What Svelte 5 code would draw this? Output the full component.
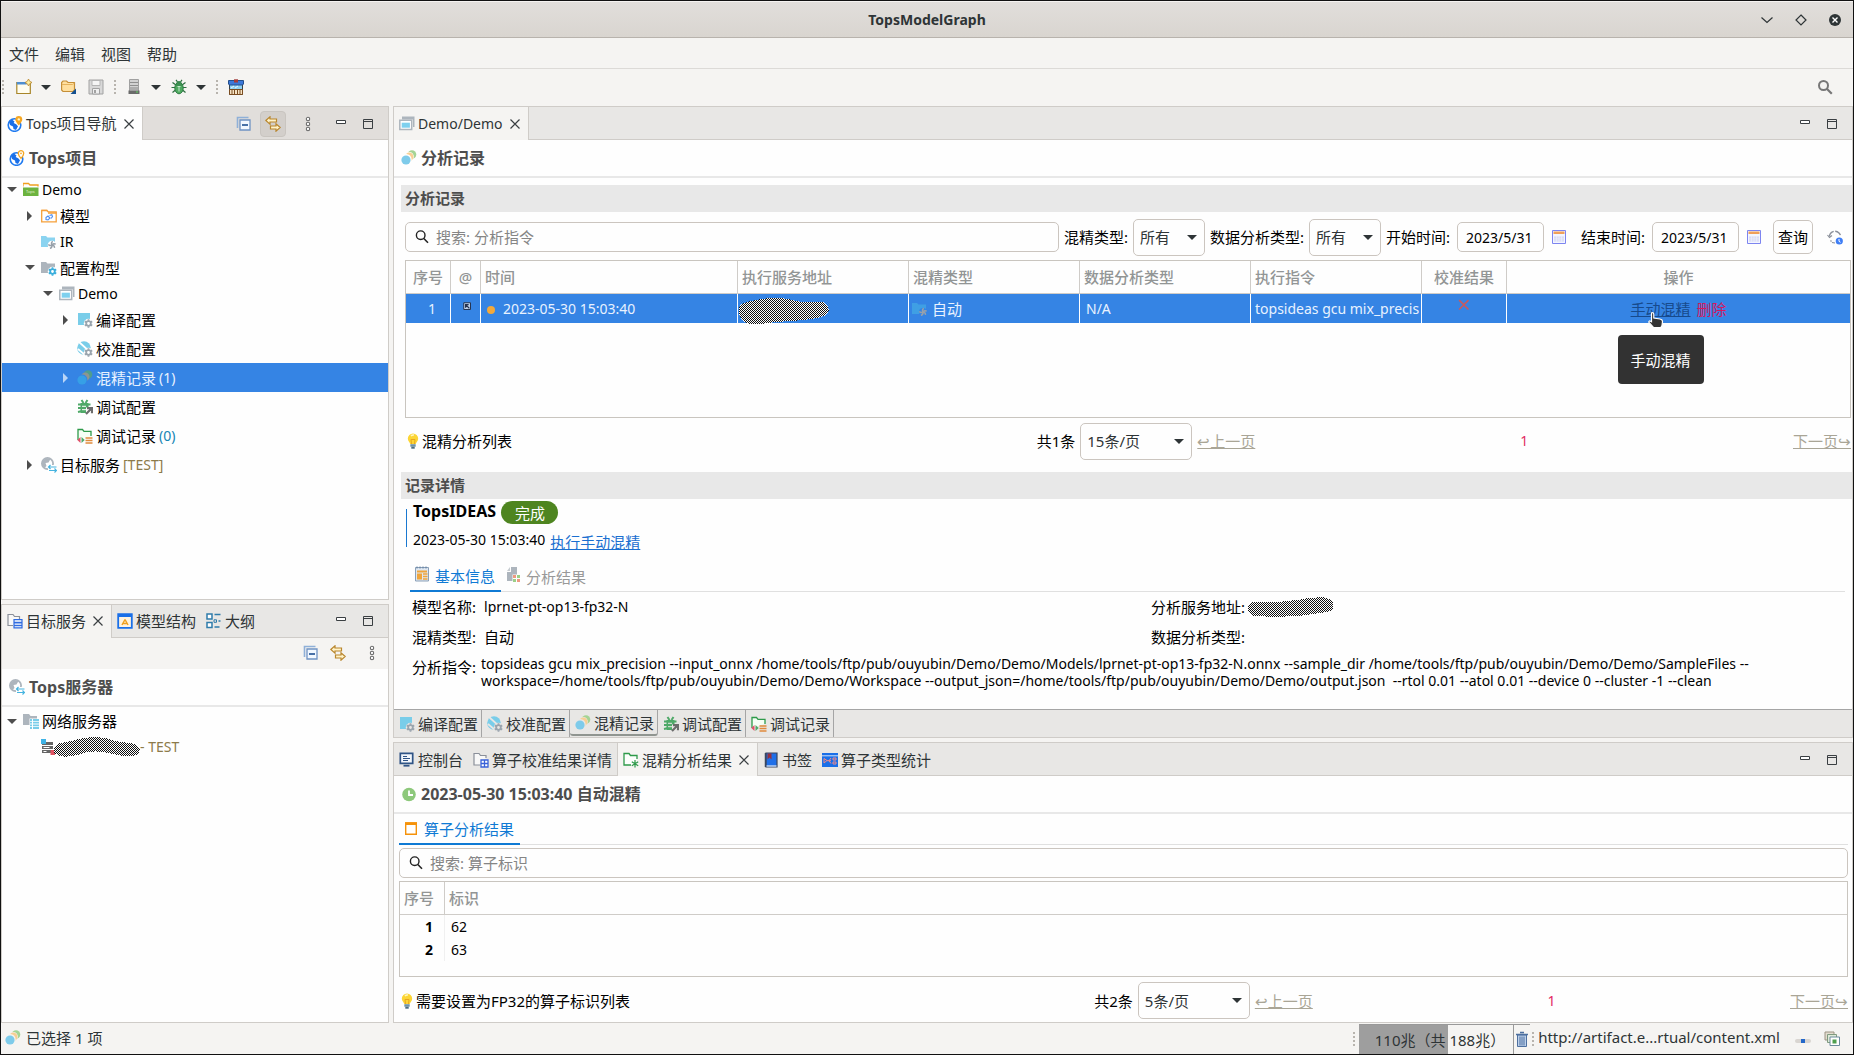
<script>
  const gear = (c) =>
    `<g fill="none" stroke="${c}"><circle cx="11.5" cy="11.5" r="2.3" stroke-width="1.8"/><path d="M11.5 7.2v1.6M11.5 14.2v1.6M7.8 9.4l1.4.8M13.8 12.8l1.4.8M7.8 13.6l1.4-.8M13.8 10.2l1.4-.8" stroke-width="1.8"/></g>`;
  const pinwheel =
    '<g fill="none" stroke="#98a1aa" stroke-width="1.5"><path d="M11 11c-1-1.5-.5-3 .8-3.6M11 11c1-1.5 2.6-1.6 3.6-.6M11 11c1.8.1 2.7 1.4 2.4 2.8M11 11c.3 1.8-.7 3-2.1 3.2M11 11c-1.4 1-2.9.6-3.6-.6"/></g>';

  const icons = {
    globe:
      '<circle cx="7.5" cy="9" r="6.300" fill="#fff" stroke="#1f7af0" stroke-width="1.600"/><path d="M2 6l3-2.500 2.500 2-.8 1.500 2.500 1.200 1.800 2-2 3.800-2.500-1-.5-2.600-3-1.400z" fill="#1a6fe8"/><path d="M11.800 0a3.500 3.500 0 0 1 3.500 3.400c0 2.200-3.500 6-3.500 6S8.300 5.600 8.300 3.400A3.500 3.500 0 0 1 11.800 0z" fill="#f5a623"/><circle cx="11.800" cy="3.400" r="1.200" fill="#fff6c8"/>',
    globeLine:
      '<circle cx="7.500" cy="9" r="6.300" fill="#fff" stroke="#1f7af0" stroke-width="1.600"/><path d="M2 6l3-2.500 2.500 2-.8 1.500 2.500 1.200 1.800 2-2 3.800-2.500-1-.5-2.600-3-1.400z" fill="#1a6fe8"/><path d="M12 .7a2.700 2.700 0 0 1 2.700 2.700c0 1.800-2.700 5-2.700 5S9.300 5.200 9.300 3.400A2.700 2.700 0 0 1 12 .7z" fill="#fff" stroke="#f5a623" stroke-width="1.300"/><circle cx="12" cy="3.300" r=".9" fill="#f5a623"/>',
    project:
      '<path d="M0 4.500V1.500h5.500L7 3h8v1.500" fill="#fff" stroke="#f0a020" stroke-width="1.300"/><path d="M0 5.500h15.500V14H0z" fill="#6cb33f"/><text x="3" y="11" font-size="4" font-family="Noto Sans" fill="#e8f5dd">Tops</text>',
    model:
      '<path d="M.700 13.800V2.300h5l1.500 1.500h8v10z" fill="#fff" stroke="#f5a03a" stroke-width="1.300"/><path d="M.5 2.500h6M7 5h8.500" stroke="#f5a03a" stroke-width="1.600"/><path d="M5 9.500l2-1.500 2 2-2 1.800-2-.300zM8.500 7.500l2.300-.8.7 2-1.500 1.800" fill="none" stroke="#4d8df0" stroke-width="1.100"/>',
    ir: `<path d="M0 2h5l1.500 1.500H14V13H0z" fill="#8ad3f0"/><circle cx="11" cy="11" r="4.300" fill="#fff"/>${pinwheel}`,
    irSel: `<path d="M0 2h5l1.500 1.500H14V13H0z" fill="#3f9fe4"/><circle cx="11" cy="11" r="4" fill="#3584e4"/>${pinwheel}`,
    config: `<path d="M0 2h5l1.500 1.500H14V13H0z" fill="#adb5bd"/><circle cx="11.500" cy="11.500" r="4.700" fill="#fff"/>${gear('#3aaedc')}`,
    windows:
      '<path d="M3 .5h12.500V11H14V3.500H3z" fill="#adb5bd"/><path d="M.8 4.300h11.900v9.200H.8z" fill="#fff" stroke="#adb5bd" stroke-width="1.500"/><path d="M2.700 6.700h8.200v5H2.700z" fill="#7ed0ee"/>',
    compile: `<path d="M1 1h12v12H1z" fill="#79cde9"/><circle cx="11.500" cy="11.500" r="4.700" fill="var(--under, #fff)"/>${gear('#9aa5ae')}`,
    calib: `<circle cx="7" cy="7" r="6.800" fill="#79cde9"/><path d="M2 1l11 10M1 8l7 6" stroke="var(--under, #fff)" stroke-width="1.700"/><circle cx="11.500" cy="11.500" r="4.700" fill="var(--under, #fff)"/>${gear('#9aa5ae')}`,
    mix: '<circle cx="11" cy="4.500" r="4.300" fill="#a5d494"/><circle cx="8.500" cy="6.500" r="4.400" fill="var(--under, #fff)"/><circle cx="8.300" cy="6.700" r="4.200" fill="#f8cf94"/><circle cx="5.400" cy="9.300" r="5.200" fill="var(--under, #fff)"/><circle cx="5" cy="10" r="4.600" fill="#7ecbea"/>',
    mixSel:
      '<circle cx="11" cy="4.500" r="4.300" fill="#4f9d8f"/><circle cx="8.300" cy="6.700" r="4.200" fill="#8d9690"/><circle cx="5.300" cy="9.600" r="5.100" fill="#3584e4"/><circle cx="5" cy="10" r="4.600" fill="#36a0e6"/>',
    debug:
      '<path d="M3.500 4h8v10h-8z" fill="#4fa968"/><path d="M4.500 1l2 3M10.500 1l-2 3M1 5.500h12.500M1 9h6M1 13l4-1" stroke="#4fa968" stroke-width="2"/><path d="M5 7.300h4M5 10.700h4" stroke="var(--under, #fff)"/><path d="M9 8.500h7v7.500H9z" fill="var(--under, #fff)"/><path d="M9 15l5-5M10 9.200h5v5" stroke="#6c6c6c" stroke-width="2.200" fill="none"/>',
    debugRec:
      '<path d="M1 12V1.500h4.500L7 3.300h7V8" fill="#f5fff5" stroke="#2e9a4a" stroke-width="1.300"/><path d="M.3 12l3.200-3v6z" fill="#e0526a"/><path d="M4.500 9l3.200 3-3.200 3z" fill="#4fa968"/><path d="M8.500 10h7M8.500 12.500h7M8.500 15h7" stroke="#e08a3c" stroke-width="1.300"/>',
    target:
      '<circle cx="6.500" cy="6.500" r="5.600" fill="#fff" stroke="#adb5bd" stroke-width="1.800"/><path d="M1.500 4l4-3 4 1-2 3.500-3 .5 1 3-2 2L1 8z" fill="#adb5bd"/><path d="M7 8h9v8H7z" fill="#fff"/><path d="M7.500 10h8M9.500 8l-2 2 2 2M8 13.500h8M13.500 11.500l2 2-2 2" stroke="#46b4e0" stroke-width="1.200" fill="none"/>',
    folderServer:
      '<path d="M6 12.500H1V1.500h5l1.500 2h5V6" fill="#f8f8f8" stroke="#8a8f99" stroke-width="1.200"/><path d="M7 6.700h8v2.600H7zM7 9.800h8v2.600H7zM7 12.600h8v2.300H7z" fill="#fff" stroke="#2f6be0" stroke-width="1.200"/>',
    structure:
      '<path d="M1.200 1.200h13.600v13.600H1.200z" fill="#fff3df" stroke="#1a6fe8" stroke-width="1.800"/><path d="M1 1h14v3H1z" fill="#1a6fe8"/><path d="M8 6.500l-3 5.500M8 6.500l3 5.500M6 10.500h4" stroke="#f0a020" stroke-width="1.500"/>',
    outline:
      '<path d="M1 1h5v5H1zM1 9.500h5v5H1z" fill="#fff" stroke="#2f7cab" stroke-width="1.500"/><path d="M8.500 1.500h6M12.500 8h2M8.500 14h5" stroke="#2f7cab" stroke-width="1.500"/><path d="M8 6.800h2.500v2.500H8z" fill="none" stroke="#2f7cab"/>',
    network:
      '<path d="M0 1h6l1.500 2H14v9H0z" fill="#adb5bd"/><path d="M6.500 5.500H16V16H6.500z" fill="#fff"/><path d="M7 7h2M10 7h6M7 9.700h2M10 9.700h6M7 12.400h2M10 12.400h6M7 15h2M10 15h6" stroke="#79cde9" stroke-width="1.800"/>',
    server:
      '<path d="M1 3h11v3H1zM1 7h11v3H1zM1 11h11v3H1z" fill="#666"/><path d="M2.500 8.500h6M2.500 12.500h3" stroke="#fff"/><path d="M0 0h5v5H0z" fill="#3fb3e6"/><path d="M9.500 11h4.500v5H9.500z" fill="#e05563"/>',
    collapse:
      '<path d="M1.500 12V1.500h11" fill="none" stroke="#8fb0d8" stroke-width="1.600"/><path d="M4 4h10v10H4z" fill="#f2f8ff" stroke="#6f93c4" stroke-width="1.300"/><path d="M6 9h6" stroke="#1d4f91" stroke-width="1.600"/>',
    link: '<path d="M.8 4.500L5 .8v2.200h6.500v3H5v2.200zM15.200 11.500L11 7.800V10H5.500v3H11v2.200z" fill="#fff3c9" stroke="#b9862d" stroke-width="1.200"/>',
    dots: '<g fill="#fff" stroke="#6c6c6c" stroke-width="1.100"><circle cx="8" cy="3" r="1.700"/><circle cx="8" cy="8" r="1.700"/><circle cx="8" cy="13" r="1.700"/></g>',
    min: '<path d="M3.500 4.500h9v3h-9z" fill="#fff" stroke="#3a3f42"/>',
    max: '<path d="M3.500 3.500h9v9h-9zM3.500 5.500h9" fill="none" stroke="#3a3f42"/>',
    close: '<path d="M3.500 3.500l9 9M12.500 3.500l-9 9" stroke="#3a3f42" stroke-width="1.200"/>',
    newWin:
      '<path d="M.8 3.500h13.500v11H.8z" fill="#fffdf0" stroke="#a8862a" stroke-width="1.200"/><path d="M.8 3h10v2.500H.8z" fill="#4f8fd0"/><path d="M12.500 0l1.200 2.300L16 3.500l-2.300 1.200-1.200 2.300-1.200-2.300L9 3.500l2.300-1.200z" fill="#fff0a0" stroke="#b9862d" stroke-width=".8"/>',
    open: '<path d="M.6 11V3.500L2 2h3.500L7 3.500h6.500V11L12 12.500H2z" fill="#ffdf9e" stroke="#c58f38" stroke-width="1.200"/><path d="M1 5.500h10.500l2-1.500" fill="none" stroke="#e5b25c"/><path d="M15 9.500v5.500H9.500z" fill="#15508f"/>',
    save: '<path d="M1 1h14v14H1z" fill="#d8d8d8" stroke="#a2a2a2"/><path d="M4 1.500h8v5H4z" fill="#f5f5f5" stroke="#b5b5b5"/><path d="M4.500 9.500h7V15h-7z" fill="#efefef" stroke="#a2a2a2"/><path d="M6 11h2v3H6z" fill="#a2a2a2"/>',
    tower:
      '<path d="M3.500.500h9v12h-9z" fill="#d2d2d2" stroke="#a0a0a0"/><path d="M4 3.500h8M4 6.500h8" stroke="#8f8f8f"/><path d="M4 8h8v3H4z" fill="#adadad"/><path d="M2.500 11.500h11V15h-11z" fill="#6a6a6a"/><path d="M10 12.500h2v1h-2z" fill="#5fd35f"/>',
    bug: '<path d="M5 .8l1.500 2.200M11 .8L9.500 3M1.500 3.500L5 6M14.500 3.500L11 6M.5 8.500H4M15.500 8.500H12M1.500 13.500L4.500 11M14.500 13.500l-3-2.500" stroke="#2c6e3f" stroke-width="1.200" fill="none"/><ellipse cx="8" cy="9" rx="4.200" ry="5.800" fill="#4faa60" stroke="#2c7a43"/><path d="M5 6h6" stroke="#2c7a43"/><path d="M6.500 7.500h3M8 7.500v5" stroke="#c4e8cb" stroke-width="1"/><ellipse cx="8" cy="3.500" rx="2.500" ry="1.500" fill="#3a8a50"/>',
    shop: '<path d="M1.500 5h13v10.500h-13z" fill="#8fd0f2" stroke="#33414d"/><path d="M.5 1.500h15V5l-1 1h-13l-1-1z" fill="#3b78d9" stroke="#244f8c"/><path d="M6 .3h4v3.200H6z" fill="#a33a3a"/><path d="M3 9l3-2M7 9l3-2" stroke="#e5f6ff"/><path d="M1.500 10.500h13v5h-13z" fill="#f5e2c4" stroke="#7a4c20"/><path d="M4 11v4.500M6.500 11v4.500M9.500 11v4.500M12 11v4.500" stroke="#7a4c20"/>',
    searchBig: '<circle cx="6.500" cy="6.500" r="4.500" fill="none" stroke="#777" stroke-width="2"/><path d="M9.800 9.800l5 5" stroke="#777" stroke-width="2.200"/>',
    search: '<circle cx="6.700" cy="6.200" r="4.300" fill="none" stroke="#222" stroke-width="1.400"/><path d="M9.800 9.500l4.200 4.200" stroke="#222" stroke-width="1.600"/>',
    calendar:
      '<path d="M1.500 1.500h13v13h-13z" fill="#f4f6ff" stroke="#7d85f0"/><path d="M2.500 2.500h11V5h-11z" fill="#f0a05a"/><path d="M3 7.500h10v5H3z" fill="#d3d7f2"/><path d="M3 9.200h10M3 11h10M5.500 7v6M8 7v6M10.500 7v6" stroke="#eceefc" stroke-width=".8"/>',
    refresh:
      '<path d="M2.500 7.500a5.500 5.500 0 0 1 9.500-3.500l1.500 2" fill="none" stroke="#8a8f99" stroke-width="1.300" stroke-dasharray="7 1.500"/><path d="M.5 6l2 2.500L5 6.500M5 13.500l3 .5M3.500 11.500l1 1" fill="none" stroke="#8a8f99" stroke-width="1.200"/><circle cx="12.300" cy="12" r="3.600" fill="#3f7ef5"/><path d="M12 10v2.300l1.500 1" stroke="#fff" fill="none"/>',
    box: '<path d="M5 5h9v9H5z" fill="#c3d4ea" stroke="#24314d" stroke-width="1.300"/><path d="M7.500 11.500v-4h4M8 8l4.500 4.500" stroke="#24314d" stroke-width="1.700" fill="none"/>',
    redX: '<path d="M1.500 1.500l12.500 12.500M14 1.500L1.500 14" stroke="#c75a5e" stroke-width="2.200"/>',
    bulb: '<path d="M8 .5a5.200 5.200 0 0 1 5.200 5.200c0 2.300-2 3.500-2.400 5.300H5.200C4.800 9.200 2.800 8 2.800 5.700A5.200 5.200 0 0 1 8 .5z" fill="#fcd535"/><path d="M6 3a3 3 0 0 1 3-1" stroke="#fff7c2" stroke-width="1.500" fill="none"/><path d="M6.500 11L6 6.500h4L9.500 11" fill="none" stroke="#e8a620"/><path d="M5.300 11.200h5.400v2.500H5.300z" fill="#6f93a8"/><path d="M6.300 13.700h3.400v2H6.300z" fill="#4b6c80"/>',
    form: '<path d="M1.500 1.500h13v13.500h-13z" fill="#dfe7f1" stroke="#8aa0b8"/><path d="M3 .5v2M6 .5v2M9 .5v2M12 .5v2" stroke="#5f7d9f"/><path d="M3 4.500h10v2H3zM3 7.500h5v6H3z" fill="#f0a53a"/><path d="M9 8h4.500M9 10.500h4.500M9 13h4.500" stroke="#f0a53a" stroke-width="1.400"/>',
    result:
      '<path d="M6 0h6v14H2V5h4z" fill="#adb5bd"/><path d="M2 4l3-4v4z" fill="#c5cbd0"/><path d="M7.500 7.500h7v8h-7z" fill="#fff"/><path d="M8 8h3v3H8zM12 12h3v3h-3z" fill="#ee9a82"/><path d="M12 8h3v3h-3zM8 12h3v3H8z" fill="#9bd087"/>',
    consoleIc:
      '<path d="M1.300 1.300h12.400v10H1.300z" fill="#f3f7fc" stroke="#2f5486" stroke-width="1.700"/><path d="M4 4.500h4M4 6.500h7M4 8.500h5" stroke="#2f5486"/><path d="M4.500 13.700h6" stroke="#2f5486" stroke-width="1.800"/>',
    folderGrid:
      '<path d="M7 13H1V1.500h5l1.500 2h5.500V6" fill="#f8f8f8" stroke="#8a8f99" stroke-width="1.200"/><path d="M8 8h7v7H8zM8 11.500h7M11.500 8v7" fill="#fff" stroke="#3a62d8" stroke-width="1.300"/>',
    folderStar:
      '<path d="M8 13H1V1.500h5l1.500 2H14V7" fill="#fdfffd" stroke="#2e9a4a" stroke-width="1.300"/><path d="M12 8v7.500M8.800 9.800l6.400 4M15.200 9.800l-6.400 4" stroke="#2e9a4a" stroke-width="1.200"/>',
    bookmark:
      '<path d="M3 1h11v14H3z" fill="#1f6fe8" stroke="#3a465e" stroke-width="1.200"/><path d="M2.500 1v14" stroke="#3a465e" stroke-width="1.500"/><path d="M3.500 14h10" stroke="#e6ebf2" stroke-width="1.200"/><path d="M4.500 1.500h4v6l-2-2-2 2z" fill="#96303d"/>',
    stats:
      '<path d="M0 1h16v14H0z" fill="#1a6fe8"/><path d="M0 3.800h16" stroke="#fff" stroke-width=".8"/><path d="M2 6.500l3 2-3 2.500zM11 6h3v2h-3zM11 10h3v2h-3z" fill="none" stroke="#f08a8a"/><path d="M5 8.700h4M9 6l-2 2.700L9 11.500" stroke="#f08a8a" fill="none"/>',
    clock: '<circle cx="8" cy="8.500" r="6.800" fill="#8dc87b"/><path d="M8 4.500V9h4" stroke="#fff" stroke-width="1.800" fill="none"/>',
    orangeWin: '<path d="M2.700 2h10.600v11.300H2.700z" fill="#fff" stroke="#f5920a" stroke-width="1.400"/><path d="M2 1.300h12V4H2z" fill="#f5920a"/>',
    trash: '<path d="M3.500 4h9v11.500h-9z" fill="#bcd0ea" stroke="#4d6f9f"/><path d="M2 3.500h12M6 1.500h4" stroke="#4d6f9f" stroke-width="1.400"/><path d="M6 5.500v9M8 5.500v9M10 5.500v9" stroke="#4d6f9f"/>',
    progress: '<rect x="0" y="9" width="16" height="4" rx="2" fill="#d9d5d1"/><path d="M6 9h4v4H6z" fill="#2468c9"/>',
    stack: '<path d="M1 1h9v8H1z" fill="#e3dccf" stroke="#9c9484"/><path d="M3.500 3.500h9v8h-9z" fill="#dfead9" stroke="#7f9a7f"/><path d="M6 6h9.500v8.500H6z" fill="#fff" stroke="#6c8c9c"/><path d="M8.500 8.500h4v4h-4z" fill="#4fa04f"/>',
    down: '<path d="M3 6h10L8 11z" fill="#2e3436"/>',
    hand: '<path d="M4 1.500c1.500 0 1.800.7 1.800 1.500v4l6.200 1c1.700.3 2.500 1 2.500 2.500l-.5 4-1.500 2.500H6L1 11.500c-.5-1 .5-2 1.500-1.200l1 .5V2.500z" fill="#333" stroke="#fff" stroke-width="1.200"/>'
  };

  const menus = ['文件', '编辑', '视图', '帮助'];

  const tree = [
    { level: 0, icon: 'project', latin: 'Demo', open: true },
    { level: 1, icon: 'model', label: '模型', open: false },
    { level: 1, icon: 'ir', latin: 'IR' },
    { level: 1, icon: 'config', label: '配置构型', open: true },
    { level: 2, icon: 'windows', latin: 'Demo', open: true },
    { level: 3, icon: 'compile', label: '编译配置', open: false },
    { level: 3, icon: 'calib', label: '校准配置' },
    { level: 3, icon: 'mixSel', label: '混精记录', note: '(1)', open: false, selected: true },
    { level: 3, icon: 'debug', label: '调试配置' },
    { level: 3, icon: 'debugRec', label: '调试记录', note: '(0)', tone: 'teal' },
    { level: 1, icon: 'target', label: '目标服务', note: '[TEST]', tone: 'olive', open: false }
  ];

  const columns = ['序号', '@', '时间', '执行服务地址', '混精类型', '数据分析类型', '执行指令', '校准结果', '操作'];

  const pages = [
    { icon: 'compile', label: '编译配置' },
    { icon: 'calib', label: '校准配置' },
    { icon: 'mix', label: '混精记录', active: true },
    { icon: 'debug', label: '调试配置' },
    { icon: 'debugRec', label: '调试记录' }
  ];

  const views = [
    { icon: 'consoleIc', label: '控制台' },
    { icon: 'folderGrid', label: '算子校准结果详情' },
    { icon: 'folderStar', label: '混精分析结果', active: true },
    { icon: 'bookmark', label: '书签' },
    { icon: 'stats', label: '算子类型统计' }
  ];

  const operators = [62, 63];
</script>

{#snippet icon(name)}
  <svg class="icon" viewBox="0 0 16 16" width="16" height="16" aria-hidden="true">{@html icons[name]}</svg>
{/snippet}

{#snippet windowTools()}
  <button class="tool" aria-label="最小化">{@render icon('min')}</button>
  <button class="tool" aria-label="最大化">{@render icon('max')}</button>
{/snippet}

{#snippet scribble(d, w, h)}
  <svg class="scribble" width={w} height={h} viewBox="0 0 {w} {h}" shape-rendering="crispEdges" aria-hidden="true">
    <defs>
      <pattern id="dither{w}" width="2" height="2" patternUnits="userSpaceOnUse">
        <path d="M0 0h1v1H0zM1 1h1v1H1z" fill="#111" />
        <path d="M1 0h1v1H1zM0 1h1v1H0z" fill="#fff" />
      </pattern>
    </defs>
    <path {d} fill="url(#dither{w})" />
  </svg>
{/snippet}

{#snippet pager(note, count, size, id)}
  <div class="pager">
    <p class="hint">{@render icon('bulb')}<span>{note}</span></p>
    <label for={id}>共{count}条</label>
    <span class="combo wide">
      <select {id}><option>{size}条/页</option></select>
      {@render icon('down')}
    </span>
    <a class="page-link" href="#prev">↩上一页</a>
    <span class="page-no lat">1</span>
    <a class="page-link" href="#next">下一页↪</a>
  </div>
{/snippet}

<div class="window">
  <header class="titlebar">
    <h1>TopsModelGraph</h1>
    <div class="window-buttons">
      <button aria-label="最小化窗口">
        <svg width="14" height="14" viewBox="0 0 14 14"><path d="M1.500 4.500L7 9.500l5.500-5" fill="none" stroke="#2e3436" stroke-width="1.200" /></svg>
      </button>
      <button aria-label="最大化窗口">
        <svg width="14" height="14" viewBox="0 0 14 14"><path d="M7 2l5 5-5 5-5-5z" fill="none" stroke="#2e3436" stroke-width="1.200" /></svg>
      </button>
      <button aria-label="关闭窗口">
        <svg width="14" height="14" viewBox="0 0 14 14"><circle cx="7" cy="7" r="6" fill="#2e3436" /><path d="M4.500 4.500l5 5M9.500 4.500l-5 5" stroke="#fff" stroke-width="1.400" /></svg>
      </button>
    </div>
  </header>

  <nav class="menubar">
    {#each menus as menu}<button>{menu}</button>{/each}
  </nav>

  <div class="toolbar">
    <span class="grip first"></span>
    <button class="tool" aria-label="新建">{@render icon('newWin')}</button>
    <button class="tool drop" aria-label="新建选项">{@render icon('down')}</button>
    <button class="tool" aria-label="打开">{@render icon('open')}</button>
    <button class="tool gap" aria-label="保存">{@render icon('save')}</button>
    <span class="grip"></span>
    <button class="tool" aria-label="服务器">{@render icon('tower')}</button>
    <button class="tool drop" aria-label="服务器选项">{@render icon('down')}</button>
    <button class="tool" aria-label="调试">{@render icon('bug')}</button>
    <button class="tool drop" aria-label="调试选项">{@render icon('down')}</button>
    <span class="grip"></span>
    <button class="tool" aria-label="市场">{@render icon('shop')}</button>
    <button class="tool find" aria-label="搜索">{@render icon('searchBig')}</button>
  </div>

  <main>
    <div class="column side">
      <section class="panel nav">
        <div class="tabs warm">
          <div class="tab active white">
            {@render icon('globe')}<span><span class="lat">Tops</span>项目导航</span>
            <button class="tool" aria-label="关闭">{@render icon('close')}</button>
          </div>
          <div class="tab-tools">
            <button class="tool" aria-label="全部折叠">{@render icon('collapse')}</button>
            <button class="tool pressed" aria-label="与编辑器链接">{@render icon('link')}</button>
            <button class="tool view-menu" aria-label="视图菜单">{@render icon('dots')}</button>
            {@render windowTools()}
          </div>
        </div>
        <h2>{@render icon('globeLine')}<span>Tops项目</span></h2>
        <ul class="tree" role="tree">
          {#each tree as node}
            <li class="node l{node.level}" class:latin={node.latin} class:selected={node.selected} role="treeitem" aria-selected={!!node.selected}>
              <span class="arrow" class:open={node.open === true} class:shut={node.open === false}></span>
              {@render icon(node.icon)}
              {#if node.latin}<span class="lat">{node.latin}</span>{:else}<span>{node.label}</span>{/if}
              {#if node.note}<span class="lat {node.tone ?? ''}">{node.note}</span>{/if}
            </li>
          {/each}
        </ul>
      </section>

      <section class="panel services">
        <div class="tabs">
          <div class="tab active">
            {@render icon('folderServer')}<span>目标服务</span>
            <button class="tool" aria-label="关闭">{@render icon('close')}</button>
          </div>
          <div class="tab">{@render icon('structure')}<span>模型结构</span></div>
          <div class="tab">{@render icon('outline')}<span>大纲</span></div>
          <div class="tab-tools">{@render windowTools()}</div>
        </div>
        <div class="view-tools">
          <button class="tool" aria-label="全部折叠">{@render icon('collapse')}</button>
          <button class="tool" aria-label="与编辑器链接">{@render icon('link')}</button>
          <button class="tool" aria-label="视图菜单">{@render icon('dots')}</button>
        </div>
        <h2>{@render icon('target')}<span>Tops服务器</span></h2>
        <ul class="tree" role="tree">
          <li class="node l0" role="treeitem" aria-selected="false">
            <span class="arrow open"></span>{@render icon('network')}<span>网络服务器</span>
          </li>
          <li class="node l1 latin host" role="treeitem" aria-selected="false">
            <span class="arrow"></span>{@render icon('server')}
            {@render scribble('M1 11C2 5 14 6 22 3C30 0 46-1 56 2C66 6 74 5 82 7C88 10 88 15 84 18C78 21 68 19 60 17C46 13 34 14 24 18C14 21 4 20 1 15z', 88, 20)}
            <span class="lat olive">- TEST</span>
          </li>
        </ul>
      </section>
    </div>

    <div class="column work">
      <section class="panel editor">
        <div class="tabs">
          <div class="tab active">
            {@render icon('windows')}<span class="lat">Demo/Demo</span>
            <button class="tool" aria-label="关闭">{@render icon('close')}</button>
          </div>
          <div class="tab-tools">{@render windowTools()}</div>
        </div>
        <h2>{@render icon('mix')}<span>分析记录</span></h2>

        <div class="editor-body">
          <h3>分析记录</h3>
          <div class="inset">
            <form class="filters" onsubmit={(e) => e.preventDefault()}>
              <div class="search">{@render icon('search')}<input type="text" placeholder="搜索: 分析指令" aria-label="搜索分析指令" /></div>
              <label for="mix-type">混精类型:</label>
              <span class="combo"><select id="mix-type"><option>所有</option></select>{@render icon('down')}</span>
              <label for="data-type">数据分析类型:</label>
              <span class="combo"><select id="data-type"><option>所有</option></select>{@render icon('down')}</span>
              <label for="from">开始时间:</label>
              <input class="date" id="from" type="text" value="2023/5/31" />
              <button type="button" class="tool" aria-label="选择开始时间">{@render icon('calendar')}</button>
              <label class="later" for="to">结束时间:</label>
              <input class="date" id="to" type="text" value="2023/5/31" />
              <button type="button" class="tool" aria-label="选择结束时间">{@render icon('calendar')}</button>
              <button class="query">查询</button>
              <button type="button" class="tool" aria-label="刷新">{@render icon('refresh')}</button>
            </form>

            <div class="grid records">
              <table>
                <colgroup>
                  <col class="c-no" /><col class="c-at" /><col class="c-time" /><col class="c-mid" /><col class="c-mid" /><col class="c-mid" /><col class="c-mid" /><col class="c-res" /><col />
                </colgroup>
                <thead>
                  <tr>{#each columns as c, i}<th class:center={i < 2 || i > 6}>{c}</th>{/each}</tr>
                </thead>
                <tbody>
                  <tr class="selected">
                    <td class="index lat">1</td>
                    <td class="center small">{@render icon('box')}</td>
                    <td class="lat"><span class="dot"></span>2023-05-30 15:03:40</td>
                    <td class="masked">{@render scribble('M1 10C2 4 14 3 24 1C38-1 50 0 58 3C66 5 76 3 86 4C92 8 92 14 88 17C80 21 66 22 52 23C38 23 24 27 11 26C4 24 0 17 1 10z', 92, 27)}</td>
                    <td><span class="with-icon">{@render icon('irSel')}自动</span></td>
                    <td class="lat"><span class="pad">N/A</span></td>
                    <td class="lat">topsideas gcu mix_precis</td>
                    <td class="center small">{@render icon('redX')}</td>
                    <td class="center">
                      <span class="hovered">
                        <a class="manual" href="#manual">手动混精</a>
                        <span class="pointer">{@render icon('hand')}</span>
                        <span class="tooltip" role="tooltip">手动混精</span>
                      </span>
                      <a class="remove" href="#remove">删除</a>
                    </td>
                  </tr>
                </tbody>
              </table>
            </div>

            {@render pager('混精分析列表', 1, 15, 'size-records')}
          </div>

          <h3>记录详情</h3>
          <div class="detail">
            <div class="summary">
              <div class="line"><strong>TopsIDEAS</strong><span class="badge">完成</span></div>
              <div class="line"><span class="lat">2023-05-30 15:03:40</span><a class="run" href="#run">执行手动混精</a></div>
            </div>
            <div class="subtabs">
              <button class="subtab active">{@render icon('form')}基本信息</button>
              <button class="subtab">{@render icon('result')}分析结果</button>
            </div>
            <dl>
              <div class="pair"><dt>模型名称:</dt><dd class="lat">lprnet-pt-op13-fp32-N</dd></div>
              <div class="pair"><dt>分析服务地址:</dt><dd class="tight">{@render scribble('M1 9C3 3 14 5 26 5C44 5 56 1 74 0C84 0 88 6 86 12C82 17 72 15 60 18C46 20 20 20 8 19C2 18 0 14 1 9z', 87, 20)}</dd></div>
              <div class="pair"><dt>混精类型:</dt><dd>自动</dd></div>
              <div class="pair"><dt>数据分析类型:</dt><dd></dd></div>
              <div class="pair full"><dt>分析指令:</dt><dd class="lat cmd">topsideas gcu mix_precision --input_onnx /home/tools/ftp/pub/ouyubin/Demo/Demo/Models/lprnet-pt-op13-fp32-N.onnx --sample_dir /home/tools/ftp/pub/ouyubin/Demo/Demo/SampleFiles --<br />workspace=/home/tools/ftp/pub/ouyubin/Demo/Demo/Workspace --output_json=/home/tools/ftp/pub/ouyubin/Demo/Demo/output.json&nbsp; --rtol 0.01 --atol 0.01 --device 0 --cluster -1 --clean</dd></div>
            </dl>
          </div>
        </div>

        <div class="pages">
          {#each pages as p}<button class="page" class:active={p.active}>{@render icon(p.icon)}{p.label}</button>{/each}
        </div>
      </section>

      <section class="panel results">
        <div class="tabs">
          {#each views as v}
            <div class="tab" class:active={v.active}>
              {@render icon(v.icon)}<span>{v.label}</span>
              {#if v.active}<button class="tool" aria-label="关闭">{@render icon('close')}</button>{/if}
            </div>
          {/each}
          <div class="tab-tools">{@render windowTools()}</div>
        </div>
        <h2>{@render icon('clock')}<span>2023-05-30 15:03:40 自动混精</span></h2>
        <div class="results-body">
          <div class="subtabs">
            <button class="subtab active">{@render icon('orangeWin')}算子分析结果</button>
          </div>
          <div class="search">{@render icon('search')}<input type="text" placeholder="搜索: 算子标识" aria-label="搜索算子标识" /></div>
          <div class="grid operators">
            <table>
              <colgroup><col class="c-no" /><col /></colgroup>
              <thead><tr><th>序号</th><th>标识</th></tr></thead>
              <tbody>
                {#each operators as op, i}
                  <tr><td class="num lat">{i + 1}</td><td class="lat">{op}</td></tr>
                {/each}
              </tbody>
            </table>
          </div>
          {@render pager('需要设置为FP32的算子标识列表', 2, 5, 'size-operators')}
        </div>
      </section>
    </div>
  </main>

  <footer class="status">
    {@render icon('mix')}
    <span class="message">已选择 1 项</span>
    <span class="grip"></span>
    <span class="heap">110兆（共 188兆）</span>
    <button class="tool trash" aria-label="垃圾回收">{@render icon('trash')}</button>
    <span class="grip"></span>
    <span class="url">http://artifact.e...rtual/content.xml</span>
    {@render icon('progress')}
    <button class="tool last" aria-label="后台任务">{@render icon('stack')}</button>
  </footer>
</div>

<style>
  :global(body) {
    margin: 0;
    background: #000;
  }
  .window {
    --line: #cfccc8;
    display: flex;
    flex-direction: column;
    min-height: 100vh;
    box-sizing: border-box;
    border: 1px solid #111;
    background: #f5f4f2;
    color: #000;
    font: 15px/20px 'Noto Sans', 'Noto Sans CJK SC', sans-serif;
  }
  .window :global(*) {
    box-sizing: border-box;
  }
  button,
  input,
  select {
    font: inherit;
    color: inherit;
    margin: 0;
    padding: 0;
    border: 0;
    background: none;
  }
  h1, h2, h3, p, ul, dl, dd {
    margin: 0;
    padding: 0;
  }
  .icon {
    flex: none;
    display: block;
  }
  .lat {
    font-size: 14px;
  }
  .tool {
    display: flex;
    flex: none;
  }

  .titlebar {
    display: grid;
    grid-template-columns: 1fr auto 1fr;
    align-items: center;
    height: 37px;
    background: linear-gradient(#e1dedb, #d9d5d0);
    border-top: 1px solid #f5f3f1;
    border-bottom: 1px solid #b8b3ad;
  }
  h1 {
    grid-column: 2;
    font-size: 14px;
    line-height: 20px;
    color: #2e3436;
  }
  .window-buttons {
    display: flex;
    justify-content: flex-end;
    gap: 20px;
    padding-right: 11px;
  }
  .window-buttons button {
    display: flex;
  }
  .menubar {
    display: flex;
    gap: 16px;
    height: 31px;
    padding: 2px 8px 0;
    color: #2e3436;
    border-bottom: 1px solid #dcdad7;
  }
  .toolbar {
    display: flex;
    align-items: center;
    height: 37px;
    padding: 0 20px 2px 0;
  }
  .toolbar .drop {
    margin: 0 7px 0 6px;
  }
  .toolbar .gap {
    margin-left: 11px;
  }
  .toolbar .find {
    margin-left: auto;
  }
  .grip {
    flex: none;
    width: 2px;
    height: 14px;
    margin: 0 10px;
    background: repeating-linear-gradient(#b8b4ae 0 2px, transparent 2px 4px);
  }
  .grip.first {
    margin: 0 12px 0 1px;
  }
  .drop + .grip {
    margin-left: 0;
  }

  main {
    flex: 1;
    display: grid;
    grid-template-columns: 388px minmax(0, 1fr);
    gap: 4px;
  }
  .column {
    display: flex;
    flex-direction: column;
    gap: 4px;
    min-width: 0;
  }
  .panel {
    display: flex;
    flex-direction: column;
    background: #fefefe;
    border: 1px solid var(--line);
    min-width: 0;
  }
  .nav {
    flex: 494 1 0;
  }
  .services {
    flex: 419 1 0;
  }
  .editor {
    flex: 1 0 auto;
  }
  .tabs {
    display: flex;
    height: 33px;
    background: #e8e7e5;
    color: #2e3436;
    box-shadow: inset 0 -1px var(--line);
  }
  .tabs.warm {
    background: #e1dedb;
  }
  .tab {
    display: flex;
    align-items: center;
    gap: 3px;
    padding: 0 5px;
    white-space: nowrap;
  }
  .tab.active {
    background: #f5f4f2;
    border-right: 1px solid var(--line);
  }
  .tab.active.white {
    background: #fefefe;
  }
  .tab.active .tool {
    margin-left: 1px;
  }
  .results .tab.active {
    border-left: 1px solid var(--line);
  }
  .tab-tools {
    display: flex;
    align-items: center;
    gap: 11px;
    margin-left: auto;
    padding-right: 12px;
  }
  .pressed {
    padding: 4px;
    margin: 0 3px 0 -3px;
    background: #d3cfcb;
    border: 1px solid #c9c5c0;
    border-radius: 4px;
  }
  .tab-tools .view-menu {
    margin-right: 6px;
  }
  .view-tools {
    display: flex;
    align-items: center;
    justify-content: flex-end;
    gap: 11px;
    height: 31px;
    padding-right: 8px;
    background: #f5f4f2;
  }
  .view-tools .tool:last-child {
    margin-left: 7px;
  }
  h2 {
    display: flex;
    align-items: center;
    gap: 4px;
    height: 38px;
    padding: 0 7px;
    border-bottom: 2px solid #e8e8e8;
    font-size: 16px;
    line-height: 22px;
    color: #4d4d4d;
  }

  .tree {
    list-style: none;
  }
  .node {
    display: flex;
    align-items: center;
    gap: 3px;
    height: 29px;
    white-space: nowrap;
  }
  .node.latin {
    height: 23px;
  }
  .l1 { padding-left: 18px; }
  .l2 { padding-left: 36px; }
  .l3 { padding-left: 54px; }
  .arrow {
    display: flex;
    justify-content: center;
    width: 19px;
    margin-right: -1px;
  }
  .arrow::before {
    content: '';
    border: 5px solid transparent;
  }
  .arrow.open::before {
    border-top-color: #4d4d4d;
    border-bottom-width: 0;
  }
  .arrow.shut::before {
    border-left-color: #4d4d4d;
    border-right-width: 0;
  }
  .selected {
    background: #3584e4;
    color: #e8f2ff;
  }
  .selected .arrow.shut::before {
    border-left-color: #b9d5f7;
  }
  .teal { color: #1585b5; }
  .olive { color: #8c7a4a; }
  .scribble {
    display: block;
    flex: none;
  }
  .host .scribble {
    margin: 0 -4px 0 -7px;
  }

  .editor-body {
    flex: 1;
    padding: 7px 0 8px 7px;
  }
  h3 {
    height: 27px;
    padding: 3px 4px;
    background: #e8e8e8;
    font-size: 15px;
    line-height: 21px;
    color: #4d4d4d;
  }
  .inset {
    padding: 0 1px 0 4px;
  }
  .filters {
    display: flex;
    align-items: center;
    gap: 5px;
    height: 48px;
    white-space: nowrap;
    padding: 2px 8px 0 0;
  }
  .search {
    flex: 1;
    display: flex;
    align-items: center;
    gap: 6px;
    height: 30px;
    padding: 0 8px;
    border: 1px solid #cbc5bf;
    border-radius: 5px;
  }
  .search input {
    flex: 1;
    min-width: 0;
    outline: none;
  }
  .search input::placeholder {
    color: #858585;
    opacity: 1;
  }
  .combo {
    position: relative;
    display: block;
    width: 72px;
    height: 37px;
    color: #2e3436;
  }
  .combo.wide {
    width: 112px;
  }
  .combo select {
    appearance: none;
    width: 100%;
    height: 100%;
    padding: 0 24px 0 6px;
    border: 1px solid #cbc5bf;
    border-radius: 5px;
    background: #fefefe;
  }
  .combo .icon {
    position: absolute;
    right: 5px;
    top: 10px;
    pointer-events: none;
  }
  .date {
    width: 87px;
    height: 30px;
    padding: 0 8px;
    border: 1px solid #cbc5bf;
    border-radius: 5px;
    font-size: 14px;
    margin: 0 2px;
  }
  .later {
    margin-left: 9px;
  }
  .query {
    width: 40px;
    height: 34px;
    margin: 0 9px 0 6px;
    border: 1px solid #cbc5bf;
    border-radius: 5px;
  }

  .grid {
    border: 1px solid #c9c5bf;
  }
  .records {
    min-height: 158px;
  }
  .operators {
    height: 96px;
  }
  table {
    width: 100%;
    border-collapse: separate;
    border-spacing: 0;
    table-layout: fixed;
  }
  .c-no { width: 45px; }
  .c-at { width: 30px; }
  .c-time { width: 257px; }
  .c-mid { width: 171px; }
  .c-res { width: 85px; }
  th {
    height: 33px;
    padding: 0 4px;
    text-align: left;
    font-weight: 500;
    color: #929595;
    border-right: 1px solid var(--line);
    border-bottom: 1px solid var(--line);
    white-space: nowrap;
  }
  td {
    height: 29px;
    padding: 0 4px;
    white-space: nowrap;
    border-right: 1px solid #fefefe;
  }
  th:last-child,
  td:last-child {
    border-right: 0;
  }
  .center {
    text-align: center;
  }
  .index {
    padding-right: 14px;
    text-align: right;
  }
  .small {
    padding-top: 5px;
    vertical-align: top;
  }
  .small .icon {
    width: 12px;
    height: 12px;
    margin: 0 auto;
  }
  .dot {
    display: inline-block;
    width: 8px;
    height: 8px;
    margin: 0 8px 0 2px;
    border-radius: 50%;
    background: #f3a93c;
  }
  .masked {
    position: relative;
  }
  .masked .scribble {
    position: absolute;
    left: 0;
    top: 4px;
  }
  .with-icon {
    display: flex;
    align-items: center;
    gap: 4px;
    margin-left: -1px;
  }
  .pad {
    padding-left: 2px;
  }
  .hovered {
    position: relative;
    display: inline-block;
  }
  .manual {
    color: #174a8c;
  }
  .remove {
    margin-left: 2px;
    color: #d5175d;
    text-decoration: none;
  }
  .pointer {
    position: absolute;
    left: 17px;
    top: 12px;
  }
  .tooltip {
    position: absolute;
    left: -13px;
    top: 36px;
    padding: 15px 13px 14px;
    border-radius: 4px;
    background: #323232;
    color: #fff;
  }
  .operators td {
    height: 23px;
    padding: 0 6px;
    border-right-color: #f0f0f0;
  }
  .operators .num {
    padding-right: 11px;
    text-align: right;
    font-weight: 700;
  }

  .pager {
    display: flex;
    align-items: center;
    gap: 5px;
    white-space: nowrap;
  }
  .hint {
    flex: 1 0 auto;
    display: flex;
    align-items: center;
    gap: 1px;
  }
  .page-no {
    flex: 1 0 auto;
    text-align: center;
    color: #e22a62;
  }
  .page-link {
    color: #a9a596;
  }
  .inset .pager {
    height: 54px;
    padding-bottom: 8px;
  }

  .detail {
    padding: 0 7px 0 9px;
  }
  .summary {
    margin-left: -4px;
    padding: 2px 0 2px 7px;
    background: linear-gradient(#1a78d0, #1a78d0) 0 10px / 1px 38px no-repeat;
  }
  .line {
    display: flex;
    gap: 5px;
    height: 29px;
  }
  .line strong {
    font-size: 16px;
  }
  .badge {
    height: 23px;
    padding: 2px 13px 0 14px;
    border-radius: 12px;
    background: #4e8520;
    color: #fff;
    line-height: 21px;
  }
  .run {
    padding-top: 2px;
    color: #1a6fd0;
  }
  .subtabs {
    display: flex;
    height: 31px;
    border-bottom: 1px solid #e0e0e0;
  }
  .subtab {
    display: flex;
    gap: 5px;
    height: 31px;
    padding: 0 6px 0 4px;
    align-items: center;
    color: #999;
  }
  .subtab.active {
    color: #0f7ad4;
    border-bottom: 2px solid #0f7ad4;
  }
  .detail .subtab .icon {
    margin-bottom: 4px;
  }
  dl {
    display: grid;
    grid-template-columns: 739px 1fr;
    padding-left: 2px;
  }
  .pair {
    display: flex;
    gap: 8px;
    height: 30px;
    align-items: center;
    white-space: nowrap;
  }
  .pair.full {
    grid-column: 1 / -1;
    height: auto;
    min-height: 37px;
    align-items: flex-start;
  }
  .full dt {
    padding-top: 5px;
  }
  .tight {
    margin-left: -6px;
  }
  .cmd {
    line-height: 17px;
    margin-left: -3px;
    padding-top: 3px;
  }
  .pages {
    display: flex;
    height: 28px;
    background: #e8e7e5;
    border-top: 1px solid #a5a5a5;
    --under: #e8e7e5;
  }
  .page {
    display: flex;
    align-items: center;
    gap: 3px;
    width: 88px;
    padding: 0 3px 0 5px;
    border-right: 1px solid #a5a5a5;
    color: #2e3436;
  }
  .page.active {
    height: 26px;
    padding-top: 2px;
    border-bottom: 2px solid #909590;
    border-radius: 0 0 3px 3px;
  }

  .results-body {
    padding: 0 4px 0 5px;
  }
  .results-body .subtabs {
    margin-bottom: 3px;
  }
  .results-body .search {
    margin-bottom: 3px;
  }
  .results-body .pager {
    height: 45px;
    padding-top: 2px;
  }

  .status {
    display: flex;
    align-items: center;
    height: 31px;
    padding-left: 4px;
    color: #2e3436;
    white-space: nowrap;
    --under: #f5f4f2;
  }
  .status > .icon {
    margin-bottom: 2px;
  }
  .message {
    flex: 1;
    padding: 0 0 2px 5px;
  }
  .status .grip {
    margin: 0 4px 0 2px;
  }
  .heap {
    height: 30px;
    padding: 5px 8px 0 16px;
    border-top: 1px solid #999;
    border-right: 1px solid #999;
    background: linear-gradient(90deg, #9e9e9e 58%, transparent 58%);
  }
  .trash {
    height: 30px;
    align-items: center;
    border-top: 1px solid #999;
  }
  .url {
    margin-right: 15px;
    padding-bottom: 3px;
  }
  .last {
    margin: 0 13px;
  }
</style>
